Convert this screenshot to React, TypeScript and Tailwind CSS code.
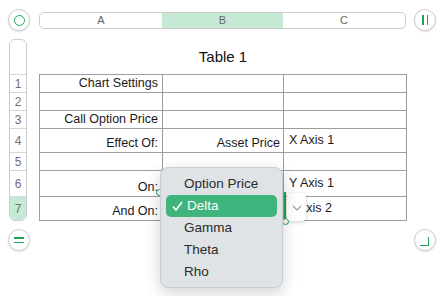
import React from 'react';

type Row = {
  num: string;
  h: string;
  a: string;
  b: string;
  c: string;
};

const rows: Row[] = [
  { num: '1', h: 'h-[18px]', a: 'Chart Settings', b: '', c: '' },
  { num: '2', h: 'h-[18px]', a: '', b: '', c: '' },
  { num: '3', h: 'h-[18px]', a: 'Call Option Price', b: '', c: '' },
  { num: '4', h: 'h-[24px]', a: 'Effect Of:', b: 'Asset Price', c: 'X Axis 1' },
  { num: '5', h: 'h-[18px]', a: '', b: '', c: '' },
  { num: '6', h: 'h-[26px]', a: 'On:', b: '', c: 'Y Axis 1' },
  { num: '7', h: 'h-[24px]', a: 'And On:', b: '', c: 'Axis 2' },
];

const options = ['Option Price', 'Delta', 'Gamma', 'Theta', 'Rho'];

function RoundButton({ children }: { children: React.ReactNode }) {
  return (
    <div className="w-[22px] h-[22px] rounded-full bg-white border border-[#cfcfcf] shadow-[0_1px_2px_rgba(0,0,0,0.12)] flex items-center justify-center">
      {children}
    </div>
  );
}

export default function App() {
  return (
    <div className="relative w-[441px] h-[296px] bg-white overflow-hidden font-['Liberation_Sans',Arial,sans-serif] text-[#1a1a1a]">
      {/* column header bar */}
      <div className="flex items-center pt-[9px] pl-[8px]">
        <RoundButton>
          <div className="w-[11px] h-[11px] rounded-full border-[1.5px] border-[#1ea552]" />
        </RoundButton>
        <div className="ml-[9px] flex h-[17px] w-[367px] rounded-[5px] border border-[#cdcdcd] overflow-hidden text-[11px] text-[#666]">
          <div className="w-[122px] flex items-center justify-center">A</div>
          <div className="w-[121px] flex items-center justify-center bg-[#c6e9d5]">B</div>
          <div className="flex-1 flex items-center justify-center">C</div>
        </div>
        <div className="ml-[8px]">
          <RoundButton>
            <div className="flex gap-[3px]">
              <div className="w-[1.5px] h-[10px] bg-[#1ea552]" />
              <div className="w-[1.5px] h-[10px] bg-[#1ea552]" />
            </div>
          </RoundButton>
        </div>
      </div>

      {/* rows + table */}
      <div className="flex mt-[8px] pl-[9px]">
        <div className="w-[18px] flex flex-col border border-[#cdcdcd] rounded-t-[6px] rounded-b-[6px] overflow-hidden text-[12px] text-[#707070]">
          <div className="h-[35px] border-b border-[#d6d6d6]" />
          {rows.map((r, i) => (
            <div
              key={r.num}
              className={
                i === rows.length - 1
                  ? 'h-[23px] flex items-center justify-center bg-[#c6e9d5]'
                  : r.h + ' flex items-center justify-center border-b border-[#d6d6d6]'
              }
            >
              {r.num}
            </div>
          ))}
        </div>

        <div className="ml-[12px] w-[368px]">
          <div className="h-[35px] flex items-center justify-center text-[15px] text-[#111] pt-[1px]">Table 1</div>
          <div className="flex flex-col border-t border-l border-[#9d9d9d] text-[12.5px] leading-[15px]">
            {rows.map((r) => (
              <div key={r.num} className={r.h + ' flex'}>
                <div className="w-[123px] border-r border-b border-[#9d9d9d] flex items-end justify-end pr-[4px] pb-[1px]">
                  {r.a}
                </div>
                <div className="w-[121px] border-r border-b border-[#9d9d9d] flex items-end justify-end pr-[3px] pb-[1px]">
                  {r.b}
                </div>
                <div
                  className={
                    r.num === '7'
                      ? 'w-[123px] border-r border-b border-[#9d9d9d] flex items-center pl-[14px]'
                      : 'w-[123px] border-r border-b border-[#9d9d9d] flex items-center pl-[5px]'
                  }
                >
                  {r.c}
                </div>
              </div>
            ))}
          </div>
        </div>
      </div>

      {/* bottom buttons */}
      <div className="flex justify-between mt-[8px] pl-[8px] pr-[5px]">
        <RoundButton>
          <div className="flex flex-col gap-[3px]">
            <div className="w-[10px] h-[1.5px] bg-[#1ea552]" />
            <div className="w-[10px] h-[1.5px] bg-[#1ea552]" />
          </div>
        </RoundButton>
        <RoundButton>
          <div className="w-[9px] h-[9px] border-r-[1.5px] border-b-[1.5px] border-[#1ea552] -translate-x-[1px] translate-y-[1px]" />
        </RoundButton>
      </div>

      {/* selection of B7 */}
      <div className="absolute left-[160px] top-[192px] w-[1.5px] h-[30px] bg-[#1ea552]" />
      <div className="absolute left-[284px] top-[192px] w-[1.5px] h-[30px] bg-[#1ea552]" />
      <div className="absolute left-[156px] top-[189px] w-[7px] h-[7px] rounded-full bg-white border-[1.5px] border-[#1ea552]" />
      <div className="absolute left-[282px] top-[218px] w-[7px] h-[7px] rounded-full bg-white border-[1.5px] border-[#1ea552]" />

      {/* popup button */}
      <div className="absolute left-[287px] top-[193px] w-[19px] h-[28px] rounded-[4px] bg-white shadow-[0_1px_4px_rgba(0,0,0,0.2)] flex items-center justify-center">
        <svg width="10" height="6" viewBox="0 0 10 6" className="mt-[2px]">
          <polyline points="1,1 5,5 9,1" fill="none" stroke="#9a9a9a" strokeWidth="1.2" />
        </svg>
      </div>

      {/* popup menu */}
      <div className="absolute left-[160px] top-[167px] w-[123px] h-[121px] rounded-[8px] bg-[#dfe3e6] border border-[#c9cdd1] shadow-[0_5px_16px_rgba(0,0,0,0.18)] pt-[5px] px-[5px] text-[13.5px] text-[#2a2a2a]">
        {options.map((o) =>
          o === 'Delta' ? (
            <div key={o} className="h-[22px] rounded-[5px] bg-[#3fb47c] text-white flex items-center">
              <svg width="18" height="12" viewBox="0 0 18 12" className="ml-[3px]">
                <polyline points="4,6.5 7,10 13,2" fill="none" stroke="#fff" strokeWidth="1.6" />
              </svg>
              <span>{o}</span>
            </div>
          ) : (
            <div key={o} className="h-[22px] flex items-center pl-[18px]">
              {o}
            </div>
          )
        )}
      </div>
    </div>
  );
}
